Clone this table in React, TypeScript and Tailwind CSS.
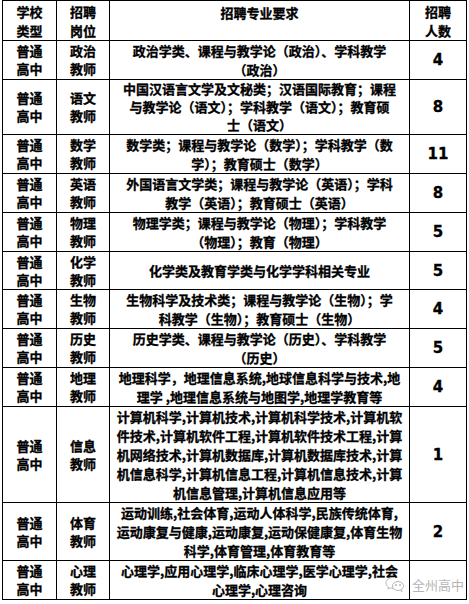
import React from 'react';

interface Row {
  type: string[];
  post: string[];
  req: string[];
  count: string;
  h: string;
  lead?: string;
}

const rows: Row[] = [
  { type: ['普通', '高中'], post: ['政治', '教师'], req: ['政治学类、课程与教学论（政治）、学科教学', '（政治）'], count: '4', h: 'h-[38px]' },
  { type: ['普通', '高中'], post: ['语文', '教师'], req: ['中国汉语言文学及文秘类；汉语国际教育；课程', '与教学论（语文）；学科教学（语文）；教育硕', '士（语文）'], count: '8', h: 'h-[54px]', lead: 'leading-[18px]' },
  { type: ['普通', '高中'], post: ['数学', '教师'], req: ['数学类；课程与教学论（数学）；学科教学（数', '学）；教育硕士（数学）'], count: '11', h: 'h-[38px]' },
  { type: ['普通', '高中'], post: ['英语', '教师'], req: ['外国语言文学类；课程与教学论（英语）；学科', '教学（英语）；教育硕士（英语）'], count: '8', h: 'h-[38px]' },
  { type: ['普通', '高中'], post: ['物理', '教师'], req: ['物理学类；课程与教学论（物理）；学科教学', '（物理）；教育（物理）'], count: '5', h: 'h-[39px]' },
  { type: ['普通', '高中'], post: ['化学', '教师'], req: ['化学类及教育学类与化学学科相关专业'], count: '5', h: 'h-[38px]' },
  { type: ['普通', '高中'], post: ['生物', '教师'], req: ['生物科学及技术类；课程与教学论（生物）；学', '科教学（生物）；教育硕士（生物）'], count: '4', h: 'h-[37px]' },
  { type: ['普通', '高中'], post: ['历史', '教师'], req: ['历史学类、课程与教学论（历史）、学科教学', '（历史）'], count: '5', h: 'h-[37px]' },
  { type: ['普通', '高中'], post: ['地理', '教师'], req: ['地理科学，地理信息系统,地球信息科学与技术,地', '理学 ,地理信息系统与地图学,地理学教育等'], count: '4', h: 'h-[39px]' },
  {
    type: ['普通', '高中'],
    post: ['信息', '教师'],
    req: [
      '计算机科学,计算机技术,计算机科学技术,计算机软',
      '件技术,计算机软件工程,计算机软件技术工程,计算',
      '机网络技术,计算机数据库,计算机数据库技术,计算',
      '机信息科学,计算机信息工程,计算机信息技术,计算',
      '机信息管理,计算机信息应用等',
    ],
    count: '1',
    h: 'h-[96px]',
  },
  { type: ['普通', '高中'], post: ['体育', '教师'], req: ['运动训练,社会体育,运动人体科学,民族传统体育,', '运动康复与健康,运动康复,运动保健康复,体育生物', '科学,体育管理,体育教育等'], count: '2', h: 'h-[56px]' },
  { type: ['普通', '高中'], post: ['心理', '教师'], req: ['心理学,应用心理学,临床心理学,医学心理学,社会', '心理学,心理咨询'], count: '', h: 'h-[37px]' },
];

const Lines = ({ lines }: { lines: string[] }) => (
  <>
    {lines.map((l, i) => (
      <div key={i} className="whitespace-nowrap">{l}</div>
    ))}
  </>
);

const WeChatMark = () => (
  <svg width="22" height="18" viewBox="0 0 22 18" fill="none" stroke="#b9b9b9" strokeWidth="1">
    <path d="M9 2.5c-4 0-7 2.4-7 5.4 0 1.7 1 3.2 2.5 4.2l-.6 1.9 2.2-1.1c.9.3 1.9.4 2.9.4" />
    <ellipse cx="14" cy="11" rx="5.5" ry="4.5" />
    <path d="M16.5 15.2l1.3 1.6-.1-2" />
    <circle cx="12" cy="10" r=".6" fill="#b9b9b9" />
    <circle cx="16" cy="10" r=".6" fill="#b9b9b9" />
  </svg>
);

export default function App() {
  return (
    <div className="w-[469px] h-[604px] bg-white relative overflow-hidden font-['Noto_Sans_CJK_SC',sans-serif] text-black">
      <table className="ml-[2px] w-[464px] border-collapse table-fixed text-[13px] font-bold leading-[18px] [-webkit-text-stroke:0.3px_black]">
        <colgroup>
          <col className="w-[54px]" />
          <col className="w-[53px]" />
          <col className="w-[300px]" />
          <col className="w-[57px]" />
        </colgroup>
        <thead>
          <tr className="h-[40px]">
            <th className="border border-black text-center align-middle font-bold leading-[19px]"><Lines lines={['学校', '类型']} /></th>
            <th className="border border-black text-center align-middle font-bold leading-[19px]"><Lines lines={['招聘', '岗位']} /></th>
            <th className="border border-black text-center align-top pt-[3px] font-bold">招聘专业要求</th>
            <th className="border border-black text-center align-middle font-bold leading-[19px]"><Lines lines={['招聘', '人数']} /></th>
          </tr>
        </thead>
        <tbody>
          {rows.map((r, i) => (
            <tr key={i} className={r.h}>
              <td className="border border-black text-center align-middle p-0"><Lines lines={r.type} /></td>
              <td className="border border-black text-center align-middle p-0"><Lines lines={r.post} /></td>
              <td className={`border border-black text-center align-middle p-0 ${r.lead ?? 'leading-[19px]'}`}>
                <Lines lines={r.req} />
              </td>
              <td className="border border-black text-center align-middle p-0 font-['DejaVu_Sans',sans-serif] text-[15px]">
                {r.count}
              </td>
            </tr>
          ))}
        </tbody>
      </table>
      <div className="absolute left-[384px] top-[575px] flex items-center gap-[6px]">
        <WeChatMark />
        <span className="text-[13px] font-normal text-[#b5b5b5] leading-none">全州高中</span>
      </div>
    </div>
  );
}
